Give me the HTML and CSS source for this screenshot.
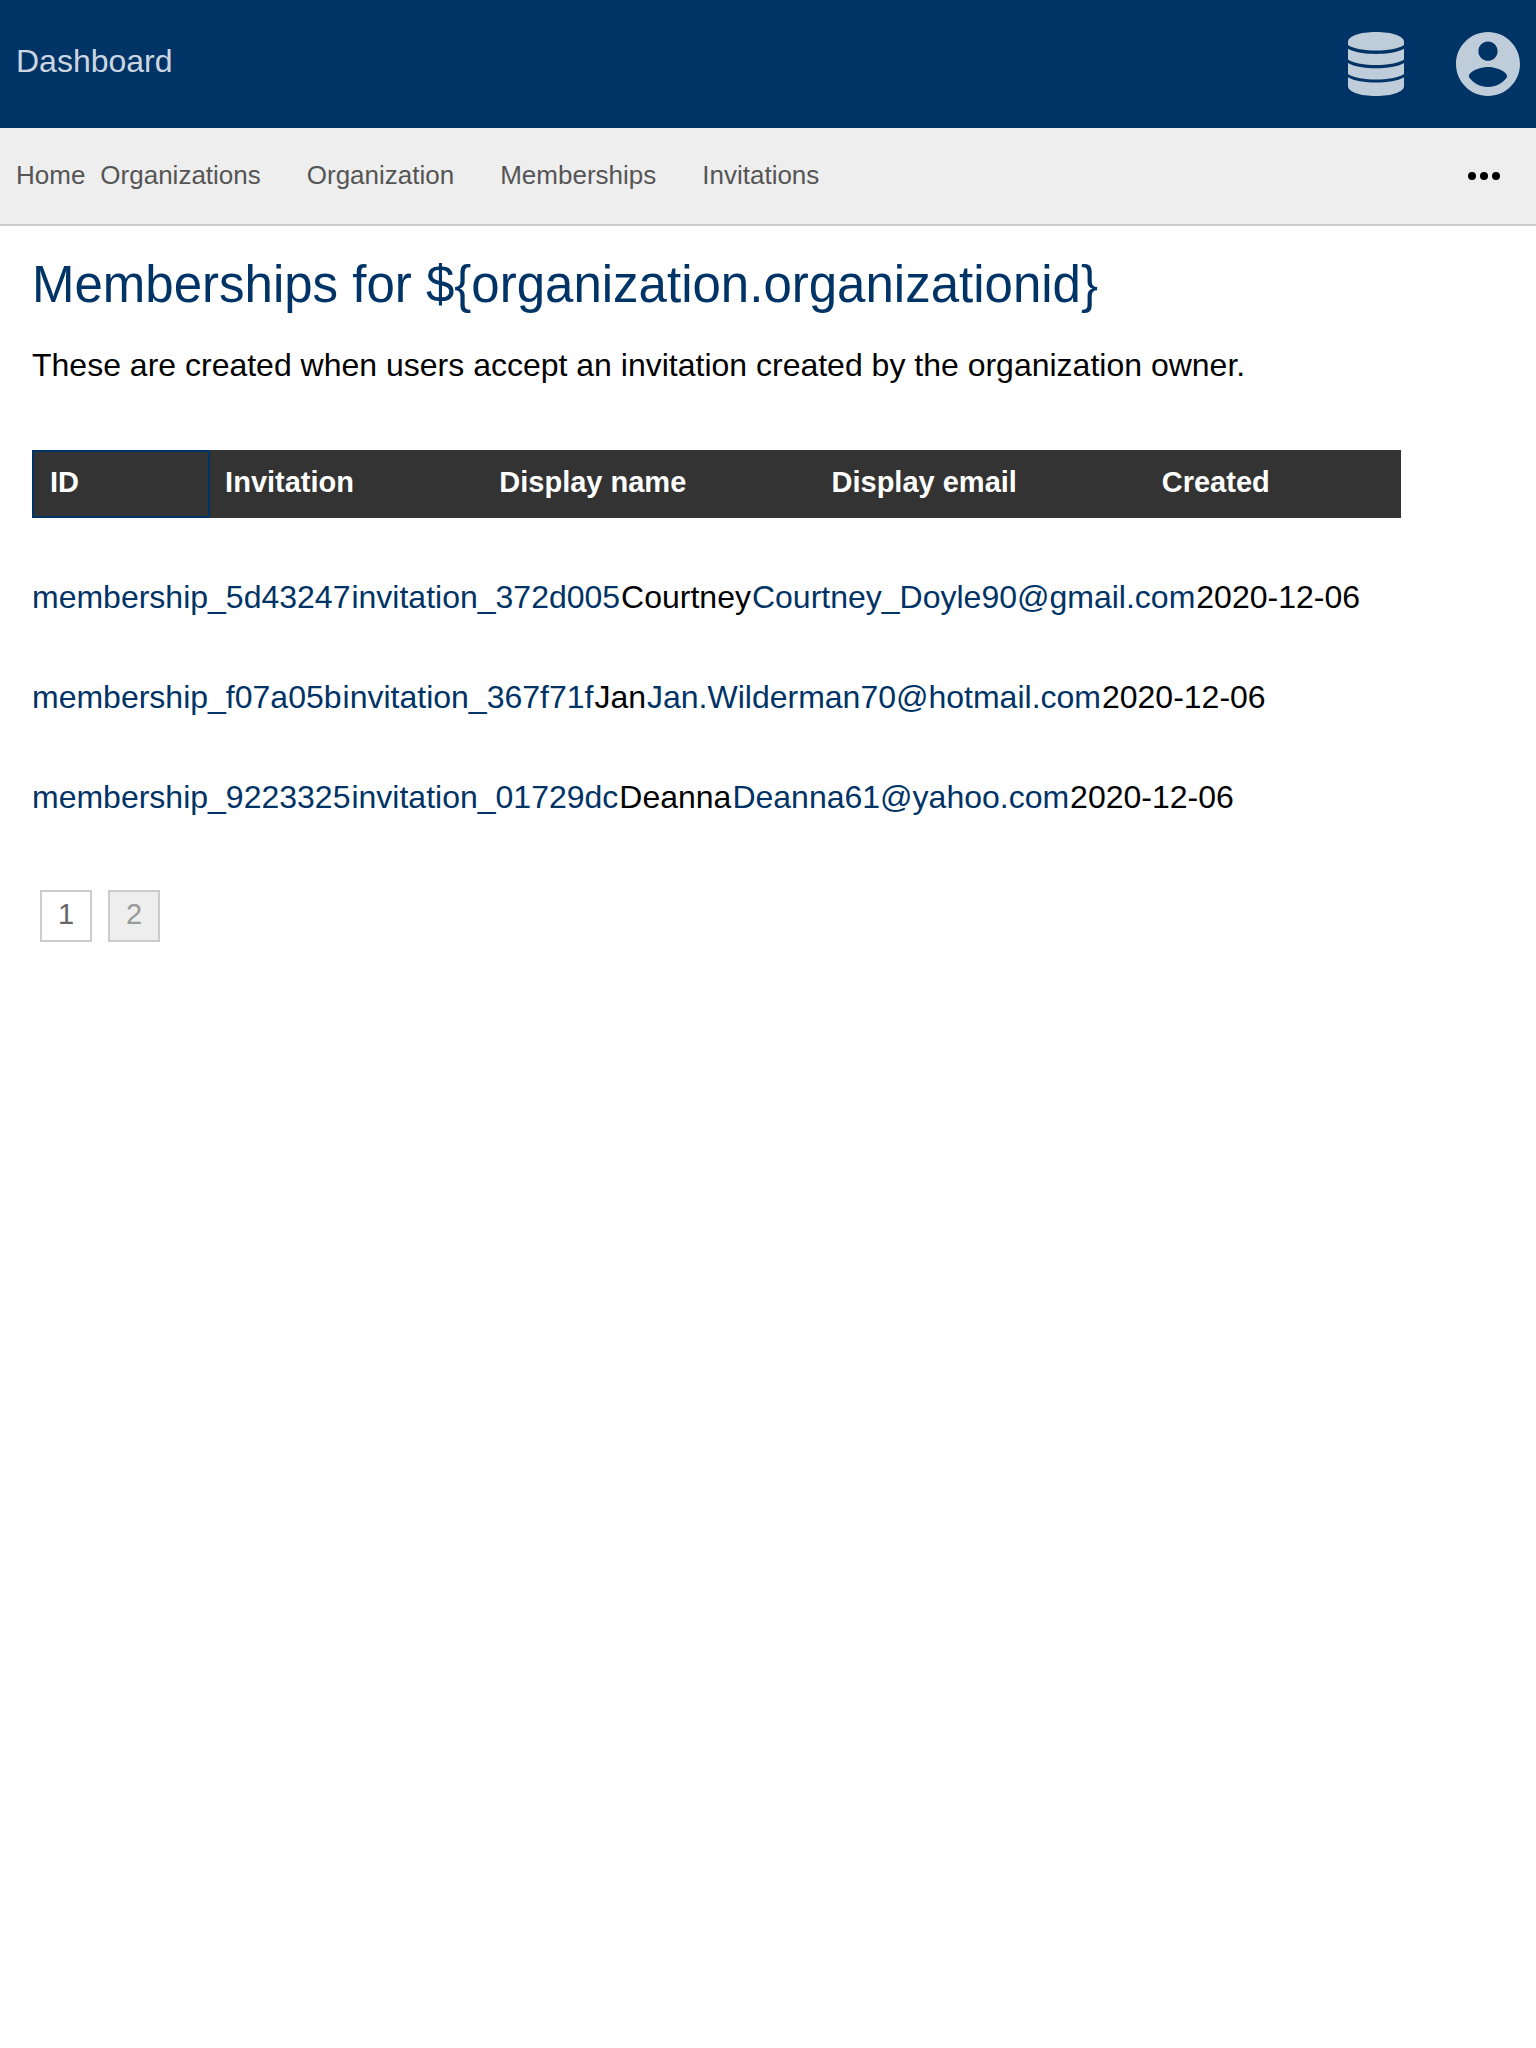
FILE: index.html
```html
<!DOCTYPE html>
<html lang="en">
<head>
<meta charset="utf-8">
<meta name="viewport" content="width=device-width, initial-scale=1">
<title>Memberships</title>
<link rel="stylesheet" href="styles.css">
</head>
<body>
<header class="topbar">
  <a class="brand" href="#">Dashboard</a>
  <div class="topbar-menus">
    <button class="icon-button" type="button" aria-label="Administration">
      <svg width="56" height="64" viewBox="0 0 56 64" fill="currentColor" aria-hidden="true">
        <path d="M0 10C0 4 12 0 28 0s28 4 28 10v3c-6 4-17 5.500-28 5.500S6 17 0 13z"/>
        <path d="M0 16.700c6 3.600 17 5.200 28 5.200s22-1.600 28-5.200V27.500c-6 4-17 5.500-28 5.500S6 31.500 0 27.500z"/>
        <path d="M0 31c6 3.700 17 5.300 28 5.300s22-1.600 28-5.300V42c-6 4-17 5.500-28 5.500S6 46 0 42z"/>
        <path d="M0 45.300c6 3.700 17 5.300 28 5.300s22-1.600 28-5.300V54c0 6-12 10-28 10S0 60 0 54z"/>
      </svg>
    </button>
    <button class="icon-button" type="button" aria-label="Account">
      <svg width="64" height="64" viewBox="2 2 20 20" fill="currentColor" aria-hidden="true">
        <path d="M12 2C6.480 2 2 6.480 2 12s4.480 10 10 10 10-4.480 10-10S17.520 2 12 2zm0 3c1.660 0 3 1.340 3 3s-1.340 3-3 3-3-1.340-3-3 1.340-3 3-3zm0 14.200c-2.500 0-4.710-1.280-6-3.220.03-1.990 4-3.080 6-3.080 1.990 0 5.970 1.090 6 3.080-1.290 1.940-3.500 3.220-6 3.220z"/>
      </svg>
    </button>
  </div>
</header>
<nav class="navbar">
  <a class="home" href="#">Home</a>
  <div class="nav-links">
    <a href="#">Organizations</a>
    <a href="#">Organization</a>
    <a href="#">Memberships</a>
    <a href="#">Invitations</a>
  </div>
  <button class="more" type="button" aria-label="More">
    <svg width="32" height="8" viewBox="0 0 32 8" aria-hidden="true">
      <circle cx="4" cy="4" r="4"/><circle cx="16" cy="4" r="4"/><circle cx="28" cy="4" r="4"/>
    </svg>
  </button>
</nav>
<main class="content">
  <h1>Memberships for ${organization.organizationid}</h1>
  <p>These are created when users accept an invitation created by the organization owner.</p>
  <table class="memberships">
    <thead>
      <tr><th class="sorted" scope="col">ID</th><th scope="col">Invitation</th><th scope="col">Display name</th><th scope="col">Display email</th><th scope="col">Created</th></tr>
    </thead>
    <tbody>
      <tr><td><a href="#">membership_5d43247</a></td><td><a href="#">invitation_372d005</a></td><td>Courtney</td><td><a href="#">Courtney_Doyle90@gmail.com</a></td><td>2020-12-06</td></tr>
      <tr><td><a href="#">membership_f07a05b</a></td><td><a href="#">invitation_367f71f</a></td><td>Jan</td><td><a href="#">Jan.Wilderman70@hotmail.com</a></td><td>2020-12-06</td></tr>
      <tr><td><a href="#">membership_9223325</a></td><td><a href="#">invitation_01729dc</a></td><td>Deanna</td><td><a href="#">Deanna61@yahoo.com</a></td><td>2020-12-06</td></tr>
    </tbody>
  </table>
  <div class="pages">
    <a class="page" href="#">1</a>
    <a class="page current" href="#" aria-current="page">2</a>
  </div>
</main>
</body>
</html>
```

FILE: styles.css
```css
* {
  box-sizing: border-box;
}

body {
  margin: 0;
  background: #fff;
  color: #000;
  font-family: "Liberation Sans", Arial, sans-serif;
  font-size: 32px;
  line-height: 38px;
}

a {
  color: #036;
  text-decoration: none;
}

button {
  display: flex;
  margin: 0;
  padding: 0;
  border: 0;
  background: none;
  cursor: pointer;
}

.topbar {
  display: flex;
  align-items: center;
  justify-content: space-between;
  min-height: 128px;
  padding: 0 16px;
  background: #036;
}

.brand {
  padding-bottom: 6px;
  color: #ccd6e0;
}

.topbar-menus {
  display: flex;
  gap: 52px;
}

.icon-button {
  color: #bfccd9;
}

.navbar {
  display: flex;
  align-items: center;
  gap: 15px;
  min-height: 98px;
  padding: 0 36px 0 16px;
  border-bottom: 2px solid #ccc;
  background: #eee;
  font-size: 26px;
}

.navbar a {
  padding-bottom: 2px;
  color: #555;
}

.nav-links {
  display: flex;
  gap: 46px;
}

.more {
  margin-left: auto;
}

.content {
  padding: 29px 32px;
}

h1 {
  margin: 0 0 31px;
  color: #036;
  font-size: 51px;
  font-weight: 400;
  line-height: 60px;
}

p {
  margin: 0 0 66px;
}

.memberships {
  display: block;
}

.memberships thead,
.memberships tbody {
  display: block;
}

.memberships thead {
  width: 93%;
  margin-bottom: 29px;
  background: #333;
}

.memberships thead tr {
  display: grid;
  grid-template-columns: 178fr 274fr 332fr 330fr 254fr;
}

.memberships th {
  padding: 16px 15px 20px;
  color: #fff;
  font-size: 29px;
  line-height: 32px;
  text-align: left;
}

.memberships .sorted {
  padding: 14px 16px 18px;
  border: 2px solid #036;
}

.memberships tbody tr {
  display: flex;
  align-items: center;
  gap: 1px;
  min-height: 100px;
}

.memberships td {
  padding: 0;
}

.pages {
  display: flex;
  gap: 16px;
  margin-top: 43px;
  padding-left: 8px;
}

.page {
  width: 52px;
  padding: 6px 0 10px;
  border: 2px solid #ccc;
  color: #666;
  font-size: 29px;
  line-height: 32px;
  text-align: center;
}

.page.current {
  background: #eee;
  color: #999;
}
```
